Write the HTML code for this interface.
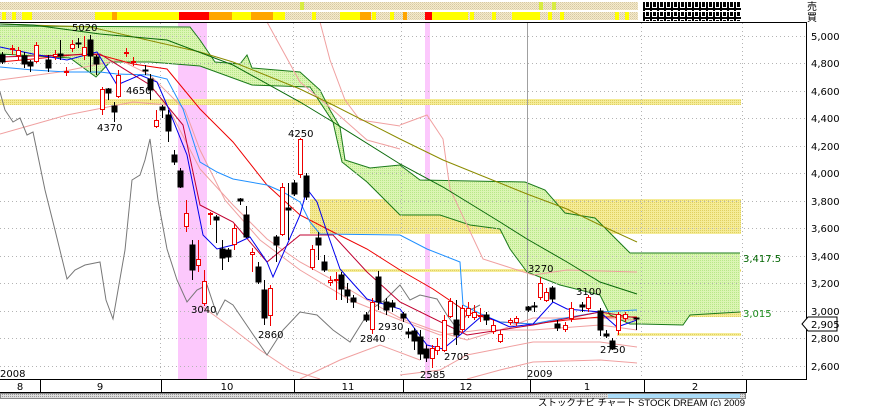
<!DOCTYPE html>
<html><head><meta charset="utf-8"><style>
html,body{margin:0;padding:0;background:#fff;}
body{width:870px;height:406px;overflow:hidden;position:relative;font-family:"DejaVu Sans","Liberation Sans","Noto Sans CJK JP",sans-serif;}
svg{position:absolute;left:0;top:0}
</style></head><body>
<svg width="870" height="406" viewBox="0 0 870 406" xmlns="http://www.w3.org/2000/svg">
<defs>
<pattern id="beige" width="2" height="2" patternUnits="userSpaceOnUse"><rect width="2" height="2" fill="#f3ead0"/><rect width="1" height="1" fill="#d8c9a0"/><rect x="1" y="1" width="1" height="1" fill="#e6d8b0"/></pattern>
<pattern id="grn" width="2" height="2" patternUnits="userSpaceOnUse"><rect width="2" height="2" fill="#dcf5b4"/><rect width="1" height="1" fill="#b8e888"/></pattern>
<pattern id="yel" width="2" height="2" patternUnits="userSpaceOnUse"><rect width="2" height="2" fill="#f5ec98"/><rect width="1" height="1" fill="#e0d060"/></pattern>
<pattern id="tofu" width="7" height="9" patternUnits="userSpaceOnUse"><rect width="7" height="9" fill="#000"/><rect x="1" y="1" width="5" height="7" fill="#fff"/><rect x="2" y="2" width="3" height="5" fill="#000"/></pattern>
<pattern id="scr" width="2" height="2" patternUnits="userSpaceOnUse"><rect width="2" height="2" fill="#ddd"/><rect width="1" height="1" fill="#999"/></pattern>
</defs>

<rect x="0" y="2" width="638" height="8" fill="url(#beige)"/>
<rect x="300" y="2" width="4" height="8" fill="#d8ec40"/>
<rect x="539" y="2" width="4" height="8" fill="#d8ec40"/>
<rect x="552" y="2" width="4" height="8" fill="#d8ec40"/>
<rect x="0" y="12" width="638" height="8" fill="url(#beige)"/>
<g fill="#ffff00">
<rect x="2" y="12" width="4" height="8"/><rect x="12" y="12" width="4" height="8"/><rect x="22" y="12" width="10" height="8"/>
<rect x="95" y="12" width="17" height="8"/><rect x="117" y="12" width="62" height="8"/>
<rect x="232" y="12" width="19" height="8"/><rect x="273" y="12" width="12" height="8"/><rect x="312" y="12" width="4" height="8"/>
<rect x="340" y="12" width="20" height="8"/><rect x="372" y="12" width="4" height="8"/><rect x="390" y="12" width="4" height="8"/>
<rect x="432" y="12" width="36" height="8"/><rect x="470" y="12" width="4" height="8"/><rect x="492" y="12" width="4" height="8"/>
<rect x="512" y="12" width="28" height="8"/><rect x="548" y="12" width="4" height="8"/><rect x="560" y="12" width="4" height="8"/>
<rect x="615" y="12" width="4" height="8"/><rect x="625" y="12" width="4" height="8"/>
</g>
<g fill="#ffa500">
<rect x="112" y="12" width="5" height="8"/><rect x="209" y="12" width="23" height="8"/><rect x="251" y="12" width="22" height="8"/>
<rect x="360" y="12" width="11" height="8"/><rect x="403" y="12" width="4" height="8"/>
</g>
<rect x="179" y="12" width="30" height="8" fill="#ff0000"/>
<rect x="425" y="12" width="7" height="8" fill="#ff0000"/>
<rect x="643" y="2" width="98" height="9" fill="url(#tofu)"/>
<rect x="643" y="12" width="98" height="9" fill="url(#tofu)"/>
<text x="807" y="10" font-size="10" fill="#000" font-family="'Noto Sans CJK JP',sans-serif">売</text>
<text x="807" y="21" font-size="10" fill="#000" font-family="'Noto Sans CJK JP',sans-serif">買</text>

<rect x="178" y="23" width="29" height="356" fill="#fcc8fc"/>
<rect x="425" y="23" width="5" height="356" fill="#fcc8fc"/>

<rect x="0" y="99" width="741" height="6" fill="url(#yel)"/>
<rect x="310" y="199" width="431" height="35" fill="url(#yel)"/>
<rect x="328" y="269" width="413" height="3" fill="url(#yel)"/>
<rect x="600" y="311" width="141" height="6" fill="url(#yel)"/>
<rect x="617" y="333" width="124" height="3" fill="url(#yel)"/>

<polygon fill="url(#grn)" points="0,26 190,27 200,40 215,62 240,64 247,55 252,68 300,72 320,90 330,110 340,127 345,160 370,168 400,165 420,180 525,182 545,190 565,213 595,218 610,233 630,253 740,253 740,312 690,315 683,325 640,324 630,324 610,315 600,295 560,285 527,272 510,249 500,229 470,225 440,215 400,215 367,182 342,162 333,122 310,87 252,85 200,66 150,62 110,62 96,77 70,58 0,54"/>
<polyline fill="none" stroke="#1a7a1a" stroke-width="1" points="0,26 190,27 200,40 215,62 240,64 247,55 252,68 300,72 320,90 330,110 340,127 345,160 370,168 400,165 420,180 525,182 545,190 565,213 595,218 610,233 630,253 740,253"/>
<polyline fill="none" stroke="#1a7a1a" stroke-width="1" points="740,312 690,315 683,325 640,324 630,324 610,315 600,295 560,285 527,272 510,249 500,229 470,225 440,215 400,215 367,182 342,162 333,122 310,87 252,85 200,66 150,62 110,62 96,77 70,58 0,54"/>

<g stroke="#b4b4b4" stroke-dasharray="1,3" stroke-width="1">
<line x1="0" y1="36.5" x2="806" y2="36.5"/><line x1="0" y1="63.5" x2="806" y2="63.5"/><line x1="0" y1="91.5" x2="806" y2="91.5"/><line x1="0" y1="118.5" x2="806" y2="118.5"/><line x1="0" y1="146.5" x2="806" y2="146.5"/><line x1="0" y1="173.5" x2="806" y2="173.5"/><line x1="0" y1="201.5" x2="806" y2="201.5"/><line x1="0" y1="228.5" x2="806" y2="228.5"/><line x1="0" y1="256.5" x2="806" y2="256.5"/><line x1="0" y1="283.5" x2="806" y2="283.5"/><line x1="0" y1="311.5" x2="806" y2="311.5"/><line x1="0" y1="338.5" x2="806" y2="338.5"/><line x1="0" y1="366.5" x2="806" y2="366.5"/>
<line x1="160.5" y1="23" x2="160.5" y2="379"/><line x1="293.5" y1="23" x2="293.5" y2="379"/><line x1="401.5" y1="23" x2="401.5" y2="379"/><line x1="641.5" y1="23" x2="641.5" y2="379"/><line x1="742.5" y1="23" x2="742.5" y2="379"/>
</g>
<line x1="527.5" y1="23" x2="527.5" y2="379" stroke="#a0a0a0"/>

<g fill="none" stroke="#f0a0a0" stroke-width="1">
<polyline points="0,134 67,115 133,102 167,105 200,169 233,205 267,239 300,262 333,280 367,300 400,318 433,330 467,340 500,330 533,318 567,318 600,318 637,320"/>
<polyline points="267,22 300,82 333,110 367,140 400,149"/>
<polyline points="400,125 427,115 443,139 450,189 483,259 533,275 567,270 637,272"/>
<polyline points="0,80 60,72 120,60 150,75 185,110 200,150 225,200 260,240 300,270 350,300 400,320 440,335 480,330 533,330 600,325 637,330"/>
<polyline points="200,305 233,329 260,350 290,370 320,379"/>
<polyline points="400,375 440,370 467,355 533,342 600,342 637,347"/>
<polyline points="467,379 500,370 533,362 600,360 637,363"/>
<polyline points="300,379 340,360 380,345 420,360"/>
<polyline points="320,22 330,60 345,100 360,120 400,126"/>
</g>

<polyline fill="none" stroke="#777" stroke-width="1" points="0,92 5,110 13,122 20,118 27,135 33,132 45,190 55,230 67,279 75,270 85,265 100,262 106,300 113,319 125,250 132,180 140,175 145,160 150,139 158,200 167,249 177,280 187,302 197,290 207,285 217,315 225,300 233,305 250,330 267,355 283,330 300,312 317,315 333,330 350,342 370,310 385,300 400,285 410,300 420,295 437,299 447,315 457,329 470,310 480,305"/>

<polyline fill="none" stroke="#8b8b00" stroke-width="1" points="0,24 90,27 200,52 233,62 300,89 333,105 400,139 443,160 480,175 527,194 567,209 600,225 637,242"/>
<polyline fill="none" stroke="#0a6a0a" stroke-width="1" points="0,24 33,25 100,34 167,40 233,65 300,102 333,122 400,164 443,187 500,222 527,239 567,262 600,282 637,294"/>
<polyline fill="none" stroke="#ee0000" stroke-width="1" points="0,62 33,59 83,54 100,55 133,64 167,69 200,109 233,142 267,185 300,215 333,232 367,249 400,270 433,289 467,312 500,322 533,324 567,320 600,317 637,317"/>
<polyline fill="none" stroke="#2090ff" stroke-width="1" points="0,67 33,70 67,72 100,72 117,74 150,75 167,79 183,109 200,162 217,172 233,179 267,185 283,192 300,202 310,222 320,234 400,235 427,249 460,262 463,305 483,315 500,322 533,324 553,320 600,312 637,310"/>
<polyline fill="none" stroke="#c00030" stroke-width="1" points="0,57 100,54 150,85 183,125 200,205 233,222 267,262 300,235 333,235 367,272 400,302 467,335 533,325 600,312 637,318"/>
<polyline fill="none" stroke="#0000ee" stroke-width="1" points="0,47 33,54 67,60 97,52 117,85 140,75 157,82 167,105 187,155 203,235 217,249 233,245 250,237 267,262 273,277 300,215 307,189 317,202 327,232 340,269 367,299 400,309 427,345 443,349 460,335 483,315 510,327 533,324 553,302 567,309 600,312 617,327 637,320"/>

<g stroke="#000" fill="#000">
<line x1="2.5" y1="52" x2="2.5" y2="64"/><rect x="0" y="55" width="5" height="7"/>
<line x1="24.5" y1="52" x2="24.5" y2="68"/><rect x="22" y="56" width="5" height="8"/>
<line x1="30.5" y1="60" x2="30.5" y2="72"/><rect x="28" y="62" width="5" height="4"/>
<line x1="48.5" y1="55" x2="48.5" y2="72"/><rect x="46" y="60" width="5" height="8"/>
<line x1="60.5" y1="40" x2="60.5" y2="60"/><rect x="58" y="54" width="5" height="2"/>
<line x1="78.5" y1="38" x2="78.5" y2="48"/><rect x="76" y="43" width="5" height="1"/>
<line x1="90.5" y1="35" x2="90.5" y2="72"/><rect x="88" y="40" width="5" height="16"/>
<line x1="96.5" y1="55" x2="96.5" y2="75"/><rect x="94" y="57" width="5" height="7"/>
<line x1="108.5" y1="88" x2="108.5" y2="100"/><rect x="106" y="89" width="5" height="4"/>
<line x1="114.5" y1="102" x2="114.5" y2="122"/><rect x="112" y="106" width="5" height="6"/>
<line x1="145.5" y1="65" x2="145.5" y2="75"/><rect x="143" y="70" width="5" height="1"/>
<line x1="150.5" y1="74" x2="150.5" y2="100"/><rect x="148" y="79" width="5" height="11"/>
<line x1="162.5" y1="105" x2="162.5" y2="118"/><rect x="160" y="107" width="5" height="3"/>
<line x1="168.5" y1="110" x2="168.5" y2="142"/><rect x="166" y="115" width="5" height="16"/>
<line x1="174.5" y1="150" x2="174.5" y2="165"/><rect x="172" y="155" width="5" height="7"/>
<line x1="180.5" y1="168" x2="180.5" y2="188"/><rect x="178" y="171" width="5" height="16"/>
<line x1="192.5" y1="240" x2="192.5" y2="280"/><rect x="190" y="245" width="5" height="25"/>
<line x1="216.5" y1="215" x2="216.5" y2="243"/><rect x="214" y="217" width="5" height="3"/>
<line x1="222.5" y1="240" x2="222.5" y2="270"/><rect x="220" y="249" width="5" height="9"/>
<line x1="228.5" y1="248" x2="228.5" y2="262"/><rect x="226" y="250" width="5" height="7"/>
<line x1="240.5" y1="198" x2="240.5" y2="205"/><rect x="238" y="199" width="5" height="2"/>
<line x1="246.5" y1="206" x2="246.5" y2="238"/><rect x="244" y="215" width="5" height="22"/>
<line x1="258.5" y1="262" x2="258.5" y2="284"/><rect x="256" y="267" width="5" height="15"/>
<line x1="264.5" y1="280" x2="264.5" y2="325"/><rect x="262" y="290" width="5" height="28"/>
<line x1="276.5" y1="235" x2="276.5" y2="262"/><rect x="274" y="237" width="5" height="8"/>
<line x1="288.5" y1="183" x2="288.5" y2="240"/><rect x="286" y="208" width="5" height="2"/>
<line x1="294.5" y1="180" x2="294.5" y2="196"/><rect x="292" y="183" width="5" height="11"/>
<line x1="306.5" y1="173" x2="306.5" y2="200"/><rect x="304" y="176" width="5" height="21"/>
<line x1="318.5" y1="232" x2="318.5" y2="260"/><rect x="316" y="238" width="5" height="7"/>
<line x1="324.5" y1="255" x2="324.5" y2="272"/><rect x="322" y="262" width="5" height="8"/>
<line x1="341.5" y1="272" x2="341.5" y2="300"/><rect x="339" y="275" width="5" height="14"/>
<line x1="347.5" y1="283" x2="347.5" y2="303"/><rect x="345" y="290" width="5" height="6"/>
<line x1="353.5" y1="295" x2="353.5" y2="308"/><rect x="351" y="298" width="5" height="4"/>
<line x1="366.5" y1="312" x2="366.5" y2="322"/><rect x="364" y="315" width="5" height="5"/>
<line x1="378.5" y1="271" x2="378.5" y2="310"/><rect x="376" y="277" width="5" height="25"/>
<line x1="386.5" y1="298" x2="386.5" y2="315"/><rect x="384" y="302" width="5" height="8"/>
<line x1="392.5" y1="300" x2="392.5" y2="312"/><rect x="390" y="303" width="5" height="4"/>
<line x1="403.5" y1="312" x2="403.5" y2="322"/><rect x="401" y="314" width="5" height="4"/>
<line x1="408.5" y1="328" x2="408.5" y2="338"/><rect x="406" y="332" width="5" height="2"/>
<line x1="414.5" y1="328" x2="414.5" y2="350"/><rect x="412" y="331" width="5" height="10"/>
<line x1="420.5" y1="330" x2="420.5" y2="360"/><rect x="418" y="337" width="5" height="17"/>
<line x1="426.5" y1="345" x2="426.5" y2="362"/><rect x="424" y="349" width="5" height="9"/>
<line x1="456.5" y1="300" x2="456.5" y2="345"/><rect x="454" y="320" width="5" height="15"/>
<line x1="486.5" y1="312" x2="486.5" y2="325"/><rect x="484" y="315" width="5" height="5"/>
<line x1="528.5" y1="306" x2="528.5" y2="312"/><rect x="526" y="307" width="5" height="3"/>
<line x1="534.5" y1="302" x2="534.5" y2="312"/><rect x="532" y="306" width="5" height="1"/>
<line x1="552.5" y1="286" x2="552.5" y2="302"/><rect x="550" y="288" width="5" height="11"/>
<line x1="557.5" y1="320" x2="557.5" y2="331"/><rect x="555" y="324" width="5" height="4"/>
<line x1="582.5" y1="302" x2="582.5" y2="312"/><rect x="580" y="305" width="5" height="2"/>
<line x1="600.5" y1="308" x2="600.5" y2="336"/><rect x="598" y="311" width="5" height="19"/>
<line x1="606.5" y1="330" x2="606.5" y2="338"/><rect x="604" y="334" width="5" height="2"/>
<line x1="612.5" y1="338" x2="612.5" y2="350"/><rect x="610" y="341" width="5" height="8"/>
<line x1="636.5" y1="318" x2="636.5" y2="330"/><rect x="634" y="318" width="5" height="1"/>
</g>
<g stroke="#ee0000" fill="#fff">
<line x1="12.5" y1="45" x2="12.5" y2="55"/><rect x="10.5" y="48.5" width="4" height="1"/>
<line x1="18.5" y1="47" x2="18.5" y2="60"/><rect x="16.5" y="50.5" width="4" height="5"/>
<line x1="36.5" y1="42" x2="36.5" y2="63"/><rect x="34.5" y="45.5" width="4" height="16"/>
<line x1="55.5" y1="50" x2="55.5" y2="60"/><rect x="53.5" y="54.5" width="4" height="2"/>
<line x1="66.5" y1="67" x2="66.5" y2="76"/><rect x="64.5" y="71.5" width="4" height="1"/>
<line x1="72.5" y1="40" x2="72.5" y2="52"/><rect x="70.5" y="44.5" width="4" height="4"/>
<line x1="84.5" y1="36" x2="84.5" y2="60"/><rect x="82.5" y="47.5" width="4" height="8"/>
<line x1="102.5" y1="87" x2="102.5" y2="115"/><rect x="100.5" y="89.5" width="4" height="20"/>
<line x1="118.5" y1="70" x2="118.5" y2="98"/><rect x="116.5" y="75.5" width="4" height="21"/>
<line x1="126.5" y1="48" x2="126.5" y2="57"/><rect x="124.5" y="52.5" width="4" height="1"/>
<line x1="133.5" y1="57" x2="133.5" y2="66"/><rect x="131.5" y="61.5" width="4" height="1"/>
<line x1="156.5" y1="110" x2="156.5" y2="128"/><rect x="154.5" y="120.5" width="4" height="6"/>
<line x1="186.5" y1="200" x2="186.5" y2="232"/><rect x="184.5" y="213.5" width="4" height="13"/>
<line x1="198.5" y1="240" x2="198.5" y2="272"/><rect x="196.5" y="259.5" width="4" height="6"/>
<line x1="204.5" y1="270" x2="204.5" y2="306"/><rect x="202.5" y="281.5" width="4" height="22"/>
<line x1="210.5" y1="212" x2="210.5" y2="225"/><rect x="208.5" y="213.5" width="4" height="1"/>
<line x1="234.5" y1="224" x2="234.5" y2="250"/><rect x="232.5" y="228.5" width="4" height="16"/>
<line x1="252.5" y1="248" x2="252.5" y2="272"/><rect x="250.5" y="252.5" width="4" height="2"/>
<line x1="270.5" y1="285" x2="270.5" y2="326"/><rect x="268.5" y="288.5" width="4" height="27"/>
<line x1="282.5" y1="183" x2="282.5" y2="236"/><rect x="280.5" y="187.5" width="4" height="47"/>
<line x1="300.5" y1="138" x2="300.5" y2="178"/><rect x="298.5" y="139.5" width="4" height="35"/>
<line x1="312.5" y1="245" x2="312.5" y2="270"/><rect x="310.5" y="249.5" width="4" height="18"/>
<line x1="330.5" y1="276" x2="330.5" y2="286"/><rect x="328.5" y="280.5" width="4" height="2"/>
<line x1="336.5" y1="272" x2="336.5" y2="300"/><rect x="334.5" y="279.5" width="4" height="1"/>
<line x1="372.5" y1="298" x2="372.5" y2="334"/><rect x="370.5" y="302.5" width="4" height="27"/>
<line x1="432.5" y1="345" x2="432.5" y2="368"/><rect x="430.5" y="348.5" width="4" height="10"/>
<line x1="437.5" y1="338" x2="437.5" y2="355"/><rect x="435.5" y="346.5" width="4" height="4"/>
<line x1="444.5" y1="315" x2="444.5" y2="352"/><rect x="442.5" y="320.5" width="4" height="30"/>
<line x1="450.5" y1="298" x2="450.5" y2="318"/><rect x="448.5" y="301.5" width="4" height="15"/>
<line x1="462.5" y1="305" x2="462.5" y2="333"/><rect x="460.5" y="308.5" width="4" height="21"/>
<line x1="468.5" y1="302" x2="468.5" y2="318"/><rect x="466.5" y="308.5" width="4" height="7"/>
<line x1="474.5" y1="305" x2="474.5" y2="320"/><rect x="472.5" y="312.5" width="4" height="5"/>
<line x1="480.5" y1="308" x2="480.5" y2="322"/><rect x="478.5" y="315.5" width="4" height="1"/>
<line x1="493.5" y1="320" x2="493.5" y2="334"/><rect x="491.5" y="325.5" width="4" height="6"/>
<line x1="500.5" y1="330" x2="500.5" y2="343"/><rect x="498.5" y="334.5" width="4" height="7"/>
<line x1="510.5" y1="318" x2="510.5" y2="325"/><rect x="508.5" y="320.5" width="4" height="2"/>
<line x1="516.5" y1="316" x2="516.5" y2="326"/><rect x="514.5" y="318.5" width="4" height="4"/>
<line x1="540.5" y1="277" x2="540.5" y2="300"/><rect x="538.5" y="283.5" width="4" height="14"/>
<line x1="546.5" y1="288" x2="546.5" y2="302"/><rect x="544.5" y="292.5" width="4" height="8"/>
<line x1="565.5" y1="322" x2="565.5" y2="332"/><rect x="563.5" y="325.5" width="4" height="4"/>
<line x1="571.5" y1="302" x2="571.5" y2="322"/><rect x="569.5" y="308.5" width="4" height="10"/>
<line x1="588.5" y1="295" x2="588.5" y2="312"/><rect x="586.5" y="297.5" width="4" height="11"/>
<line x1="618.5" y1="312" x2="618.5" y2="335"/><rect x="616.5" y="314.5" width="4" height="16"/>
<line x1="625.5" y1="312" x2="625.5" y2="322"/><rect x="623.5" y="314.5" width="4" height="4"/>
</g>

<g font-size="10" fill="#000">
<text x="72" y="31">5020</text><text x="97" y="131">4370</text><text x="126" y="94">4650</text>
<text x="191" y="313">3040</text><text x="258" y="338">2860</text><text x="288" y="137">4250</text>
<text x="360" y="342">2840</text><text x="378" y="330">2930</text><text x="420" y="378">2585</text>
<text x="444" y="360">2705</text><text x="528" y="272">3270</text><text x="576" y="295">3100</text>
<text x="600" y="353">2750</text>
<text x="0" y="377">2008</text><text x="527" y="377">2009</text>
</g>
<text x="743" y="262" font-size="10" fill="#006400">3,417.5</text>
<text x="743" y="317" font-size="10" fill="#1a8a1a">3,015</text>

<line x1="0" y1="22.5" x2="807" y2="22.5" stroke="#000"/>
<line x1="806.5" y1="22" x2="806.5" y2="380" stroke="#000"/>
<line x1="0" y1="379.5" x2="807" y2="379.5" stroke="#000"/>

<g font-size="10" fill="#000">
<text x="811" y="40">5,000</text><text x="811" y="67">4,800</text><text x="811" y="95">4,600</text><text x="811" y="122">4,400</text><text x="811" y="150">4,200</text><text x="811" y="177">4,000</text><text x="811" y="205">3,800</text><text x="811" y="232">3,600</text><text x="811" y="260">3,400</text><text x="811" y="287">3,200</text><text x="811" y="315">3,000</text><text x="811" y="342">2,800</text><text x="811" y="370">2,600</text>
</g>
<polygon points="802,324 808,317 837,317 837,331 808,331" fill="#fff" stroke="#000"/>
<text x="811" y="328" font-size="10" fill="#000">2,905</text>

<line x1="0" y1="392.5" x2="747" y2="392.5" stroke="#000"/>
<line x1="746.5" y1="379" x2="746.5" y2="393" stroke="#000"/>
<g stroke="#000"><line x1="40.5" y1="380" x2="40.5" y2="392"/><line x1="161.5" y1="380" x2="161.5" y2="392"/><line x1="294.5" y1="380" x2="294.5" y2="392"/><line x1="403.5" y1="380" x2="403.5" y2="392"/><line x1="530.5" y1="380" x2="530.5" y2="392"/><line x1="644.5" y1="380" x2="644.5" y2="392"/></g>
<g font-size="10" fill="#000" text-anchor="middle">
<text x="20" y="390">8</text><text x="100" y="390">9</text><text x="227" y="390">10</text><text x="348" y="390">11</text><text x="466" y="390">12</text><text x="587" y="390">1</text><text x="695" y="390">2</text>
</g>
<rect x="0.5" y="393.5" width="745" height="5" fill="url(#scr)" stroke="#888"/>
<rect x="608" y="394" width="132" height="4" fill="#aadcf8"/>
<text x="745" y="406" font-size="9.5" fill="#000" text-anchor="end" font-family="'Liberation Sans','Noto Sans CJK JP',sans-serif">ストックナビ  チャート  STOCK DREAM (c) 2009</text>
</svg>
</body></html>
